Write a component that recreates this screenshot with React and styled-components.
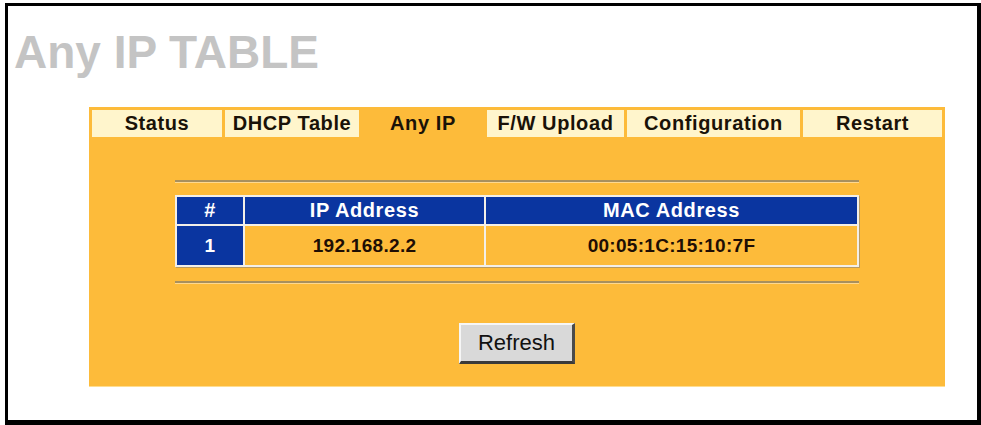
import React from "react";
import styled, { createGlobalStyle } from "styled-components";

const Global = createGlobalStyle`
  html, body { margin: 0; padding: 0; background: #ffffff; }
  * { box-sizing: border-box; }
  body { font-family: "Liberation Sans", Arial, sans-serif; }
`;

const Frame = styled.div`
  width: 976px;
  height: 422px;
  margin: 3px 0 0 5px;
  border-style: solid;
  border-color: #000;
  border-width: 3px 4px 5px 3px;
  background: #fff;
  display: flex;
  flex-direction: column;
`;

const Title = styled.h1`
  margin: 23px 0 0 6px;
  font-family: "Liberation Sans", Arial, sans-serif;
  font-weight: bold;
  font-size: 46px;
  line-height: 46px;
  color: #c4c4c4;
`;

const Panel = styled.div`
  width: 856px;
  height: 280px;
  margin: 32px 0 0 81px;
  background: #fdbb3a;
  display: flex;
  flex-direction: column;
  align-items: center;
  border-bottom: 1px solid #ffdd90;
`;

const TabRow = styled.div`
  align-self: stretch;
  display: flex;
  gap: 3px;
  padding: 3px;
`;

const Tab = styled.div`
  width: ${(p) => p.$w}px;
  height: 27px;
  display: flex;
  align-items: center;
  justify-content: center;
  background: ${(p) => (p.$active ? "transparent" : "#fff5cc")};
  font-weight: bold;
  font-size: 20px;
  letter-spacing: 0.6px;
  color: #1a1208;
`;

const Content = styled.div`
  width: 684px;
  margin-top: 40px;
  display: flex;
  flex-direction: column;
  align-items: stretch;
`;

const Rule = styled.div`
  height: 3px;
  border-top: 2px solid #a8905e;
  border-bottom: 1px solid #ffd98f;
  margin-top: ${(p) => p.$mt || 0}px;
`;

const Grid = styled.div`
  margin-top: 12px;
  display: grid;
  grid-template-columns: 66px 239px 1fr;
  grid-template-rows: 27px 39px;
  gap: 2px;
  padding: 2px;
  background: #f3efe8;
  box-shadow: 1px 1px 0 #b89a60;
`;

const Cell = styled.div`
  display: flex;
  align-items: center;
  justify-content: center;
  font-weight: bold;
  font-size: ${(p) => (p.$head ? "20px" : "19px")};
  background: ${(p) => (p.$blue ? "#0a35a0" : "#fdbb3a")};
  color: ${(p) => (p.$blue ? "#ffffff" : "#1e0e04")};
  letter-spacing: ${(p) => (p.$head ? "0.6px" : "0.3px")};
`;

const Button = styled.button`
  margin-top: 39px;
  width: 116px;
  height: 41px;
  background: #d9d9d9;
  border-style: solid;
  border-width: 2px 3px 3px 2px;
  border-color: #f6f6f6 #4a4a4a #3a3a3a #f6f6f6;
  font-family: "Liberation Sans", Arial, sans-serif;
  font-size: 22px;
  color: #111;
  padding: 0;
  cursor: pointer;
`;

const tabs = [
  { label: "Status", w: 130 },
  { label: "DHCP Table", w: 134 },
  { label: "Any IP", w: 122, active: true },
  { label: "F/W Upload", w: 137 },
  { label: "Configuration", w: 173 },
  { label: "Restart", w: 139 },
];

export default function App() {
  return (
    <>
      <Global />
      <Frame>
        <Title>Any IP TABLE</Title>
        <Panel>
          <TabRow>
            {tabs.map((t) => (
              <Tab key={t.label} $w={t.w} $active={t.active}>
                {t.label}
              </Tab>
            ))}
          </TabRow>
          <Content>
            <Rule />
            <Grid>
              <Cell $blue $head>#</Cell>
              <Cell $blue $head>IP Address</Cell>
              <Cell $blue $head>MAC Address</Cell>
              <Cell $blue>1</Cell>
              <Cell>192.168.2.2</Cell>
              <Cell>00:05:1C:15:10:7F</Cell>
            </Grid>
            <Rule $mt={14} />
          </Content>
          <Button>Refresh</Button>
        </Panel>
      </Frame>
    </>
  );
}
